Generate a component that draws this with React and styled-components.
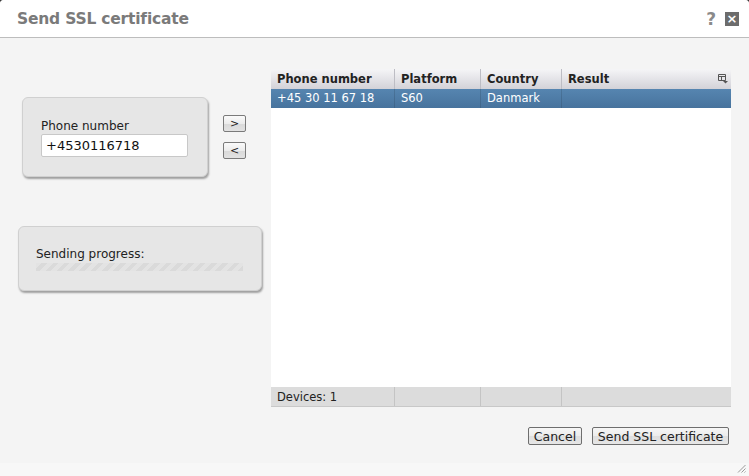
import React, { useState } from 'react'
import styled, { createGlobalStyle } from 'styled-components'

const devices = [
    { phone: '+45 30 11 67 18', platform: 'S60', country: 'Danmark', result: '' },
]

const columns = [
    { key: 'phone', title: 'Phone number', width: 124 },
    { key: 'platform', title: 'Platform', width: 86 },
    { key: 'country', title: 'Country', width: 81 },
    { key: 'result', title: 'Result', width: 169 },
]

const App = () => {
    const [phone, setPhone] = useState('+4530116718')

    return (
        <>
            <GlobalStyle />
            <Dialog>
                <Header>
                    <Title>Send SSL certificate</Title>
                    <HeaderTools>
                        <Help>?</Help>
                        <Close>×</Close>
                    </HeaderTools>
                </Header>
                <Body>
                    <Main>
                        <LeftColumn>
                            <PhoneRow>
                                <Panel $width={186} $height={80} $pad="21px 0 0 18px">
                                    <Label>Phone number</Label>
                                    <PhoneInput
                                        type="text"
                                        value={phone}
                                        onChange={e => setPhone(e.target.value)}
                                    />
                                </Panel>
                                <MoveButtons>
                                    <MoveButton>&gt;</MoveButton>
                                    <MoveButton>&lt;</MoveButton>
                                </MoveButtons>
                            </PhoneRow>
                            <ProgressWrap>
                                <Panel $width={244} $height={65} $pad="20px 0 0 17px">
                                    <Label>Sending progress:</Label>
                                    <ProgressBar />
                                </Panel>
                            </ProgressWrap>
                        </LeftColumn>
                        <Grid>
                            <GridHead>
                                {columns.map((c, i) => (
                                    <HeadCell key={c.key} $width={c.width} $last={i === columns.length - 1}>
                                        {c.title}
                                        {i === columns.length - 1 && (
                                            <ColumnsIcon width="10" height="10" viewBox="0 0 10 10">
                                                <path d="M0.5 0.5h7v6h-7z M0.5 2.5h7 M3.5 2.5v4" fill="none" stroke="#555" />
                                                <path d="M5 7h5l-2.5 2.5z" fill="#555" />
                                            </ColumnsIcon>
                                        )}
                                    </HeadCell>
                                ))}
                            </GridHead>
                            <GridBody>
                                {devices.map(d => (
                                    <Row key={d.phone} $selected>
                                        {columns.map(c => (
                                            <Cell key={c.key} $width={c.width}>{d[c.key]}</Cell>
                                        ))}
                                    </Row>
                                ))}
                            </GridBody>
                            <GridFoot>
                                {columns.map((c, i) => (
                                    <FootCell key={c.key} $width={c.width}>
                                        {i === 0 ? `Devices: ${devices.length}` : ''}
                                    </FootCell>
                                ))}
                            </GridFoot>
                        </Grid>
                    </Main>
                    <Actions>
                        <Button $width={54}>Cancel</Button>
                        <Button $width={137}>Send SSL certificate</Button>
                    </Actions>
                </Body>
                <StatusBar>
                    <Grip width="9" height="9" viewBox="0 0 9 9">
                        <path d="M8.5 1L1 8.5 M8.5 4.5L4.5 8.5 M8.5 7.5L7.5 8.5" stroke="#999" strokeWidth="1" />
                    </Grip>
                </StatusBar>
            </Dialog>
        </>
    )
}

const GlobalStyle = createGlobalStyle`
    html, body {
        margin: 0;
        padding: 0;
        background: #3a3a3a;
    }
    body {
        font-family: "DejaVu Sans", Verdana, sans-serif;
        -webkit-font-smoothing: antialiased;
    }
    * {
        box-sizing: border-box;
    }
`

const Dialog = styled.div`
    width: 749px;
    height: 476px;
    display: flex;
    flex-direction: column;
    background: #f4f4f4;
    border-radius: 4px 4px 0 0;
    overflow: hidden;
`

const Header = styled.div`
    height: 38px;
    flex-shrink: 0;
    background: #ffffff;
    border-bottom: 1px solid #bdbdbd;
    display: flex;
    align-items: center;
    justify-content: space-between;
    padding: 0 10px 0 17px;
`

const Title = styled.h1`
    margin: 0;
    margin-top: 1px;
    font-size: 15.5px;
    font-weight: bold;
    color: #7a7a7a;
    letter-spacing: -0.2px;
`

const HeaderTools = styled.div`
    display: flex;
    align-items: center;
    gap: 9px;
    margin-top: 1px;
`

const Help = styled.span`
    font-size: 17px;
    font-weight: bold;
    color: #8a8a8a;
    line-height: 1;
`

const Close = styled.span`
    width: 14px;
    height: 14px;
    background: #6c6c6c;
    color: #ffffff;
    font-size: 13px;
    font-weight: bold;
    line-height: 14px;
    text-align: center;
`

const Body = styled.div`
    flex: 1;
    display: flex;
    flex-direction: column;
    padding: 31px 18px 0 18px;
`

const Main = styled.div`
    display: flex;
    align-items: flex-start;
`

const LeftColumn = styled.div`
    width: 253px;
    display: flex;
    flex-direction: column;
    padding-top: 28px;
`

const PhoneRow = styled.div`
    display: flex;
    align-items: flex-start;
    gap: 15px;
    padding-left: 4px;
`

const Panel = styled.div`
    width: ${p => p.$width}px;
    height: ${p => p.$height}px;
    padding: ${p => p.$pad};
    background: #e6e6e6;
    border: 1px solid #d0d0d0;
    border-radius: 6px;
    box-shadow: 1px 2px 2px rgba(0, 0, 0, 0.35);
    display: flex;
    flex-direction: column;
`

const Label = styled.div`
    font-size: 12px;
    line-height: 14px;
    color: #222;
    margin-bottom: 1px;
`

const PhoneInput = styled.input`
    width: 147px;
    height: 23px;
    border: 1px solid #c8c8c8;
    border-radius: 2px;
    background: #ffffff;
    padding: 0 4px;
    font-family: "DejaVu Sans", Verdana, sans-serif;
    font-size: 13px;
    color: #111;
    outline: none;
`

const MoveButtons = styled.div`
    display: flex;
    flex-direction: column;
    gap: 10px;
    padding-top: 18px;
`

const MoveButton = styled.button`
    width: 23px;
    height: 17px;
    padding: 0;
    border: 1px solid #7a7a7a;
    border-radius: 2px;
    background: linear-gradient(#fafafa 0%, #ececec 50%, #d9d9d9 51%, #e2e2e2 100%);
    font-family: "DejaVu Sans", Verdana, sans-serif;
    font-size: 11px;
    line-height: 14px;
    color: #222;
`

const ProgressWrap = styled.div`
    margin-top: 49px;
`

const ProgressBar = styled.div`
    width: 207px;
    height: 8px;
    margin-top: 1px;
    background: repeating-linear-gradient(
        -45deg,
        #dadada 0px,
        #dadada 4px,
        #e3e3e3 4px,
        #e3e3e3 8px
    );
`

const Grid = styled.div`
    width: 460px;
    height: 338px;
    display: flex;
    flex-direction: column;
    background: #ffffff;
`

const GridHead = styled.div`
    display: flex;
    height: 20px;
    background: linear-gradient(#f5f5f7, #d3d2d8);
`

const HeadCell = styled.div`
    position: relative;
    width: ${p => p.$width}px;
    padding: 3px 6px 0;
    font-size: 11.5px;
    font-weight: bold;
    color: #222;
    border-right: ${p => (p.$last ? 'none' : '1px solid #bdbdc4')};
    white-space: nowrap;
`

const ColumnsIcon = styled.svg`
    position: absolute;
    right: 3px;
    top: 5px;
`

const GridBody = styled.div`
    flex: 1;
`

const Row = styled.div`
    display: flex;
    height: 19px;
    background: ${p => (p.$selected ? 'linear-gradient(#5685b0, #47739d)' : '#ffffff')};
    color: ${p => (p.$selected ? '#ffffff' : '#222')};
`

const Cell = styled.div`
    width: ${p => p.$width}px;
    padding: 2px 6px 0;
    font-size: 11.5px;
    white-space: nowrap;
    border-right: 1px solid rgba(0, 0, 0, 0.12);

    &:last-child {
        border-right: none;
    }
`

const GridFoot = styled.div`
    display: flex;
    height: 20px;
    background: #dcdcdc;
    border-bottom: 1px solid #c8c8c8;
`

const FootCell = styled.div`
    width: ${p => p.$width}px;
    padding: 3px 6px 0;
    font-size: 11.5px;
    color: #222;
    border-right: 1px solid #c4c4c4;

    &:last-child {
        border-right: none;
    }
`

const Actions = styled.div`
    display: flex;
    justify-content: flex-end;
    gap: 10px;
    margin-top: 20px;
    padding-right: 2px;
`

const Button = styled.button`
    width: ${p => p.$width}px;
    height: 18px;
    padding: 0;
    border: 1px solid #6e6e6e;
    border-radius: 2px;
    background: linear-gradient(#f6f6f6 0%, #ececec 50%, #dedede 51%, #e6e6e6 100%);
    font-family: "DejaVu Sans", Verdana, sans-serif;
    font-size: 12.5px;
    line-height: 15px;
    color: #222;
`

const StatusBar = styled.div`
    height: 13px;
    flex-shrink: 0;
    display: flex;
    justify-content: flex-end;
    align-items: flex-end;
    padding: 0 3px 3px 0;
    background: #f7f7f7;
`

const Grip = styled.svg`
    display: block;
`

export default App
